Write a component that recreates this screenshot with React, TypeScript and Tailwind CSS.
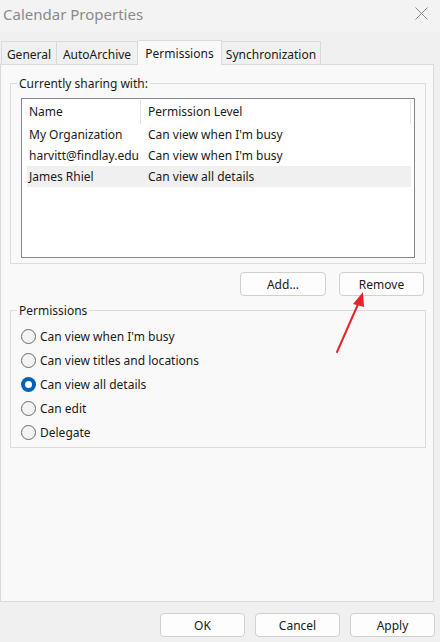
import React from "react";

const font = { fontFamily: '"Noto Sans", "Liberation Sans", sans-serif' };

function Radio({ label, checked }: { label: string; checked?: boolean }) {
  return (
    <div className="flex h-[24px] items-center">
      {checked ? (
        <span className="flex h-[15px] w-[15px] items-center justify-center rounded-full bg-[#005fb8]">
          <span className="h-[7px] w-[7px] rounded-full bg-white" />
        </span>
      ) : (
        <span className="h-[15px] w-[15px] rounded-full border border-[#6b6b6b] bg-[#f3f3f3]" />
      )}
      <span className="ml-[4px] pt-[1px] text-[12px] leading-[16px] text-[#1a1a1a]">{label}</span>
    </div>
  );
}

function Btn({ label, w }: { label: string; w: string }) {
  return (
    <button
      className={`${w} h-[24px] rounded-[4px] border border-[#d0d0d0] bg-[#fdfdfd] pt-[1px] text-[12px] leading-[16px] text-[#1a1a1a]`}
    >
      {label}
    </button>
  );
}

export default function App() {
  const rows = [
    { n: "My Organization", p: "Can view when I'm busy" },
    { n: "harvitt@findlay.edu", p: "Can view when I'm busy" },
    { n: "James Rhiel", p: "Can view all details", sel: true },
  ];
  return (
    <div className="relative flex h-[642px] w-[440px] flex-col overflow-hidden bg-[#f0f0f0]" style={font}>
      {/* Title bar */}
      <div className="flex h-[32px] items-center justify-between bg-[#f3f3f3] pl-[3px] pr-[12px]">
        <span className="-mt-[5px] text-[15px] leading-[20px] text-[#8a8a8a]">Calendar Properties</span>
        <svg width="13" height="13" viewBox="0 0 13 13" className="-mt-[6px]">
          <path d="M0.5 0.5 L12.5 12.5 M12.5 0.5 L0.5 12.5" stroke="#8a8a8a" strokeWidth="1" />
        </svg>
      </div>

      {/* Tabs */}
      <div className="flex h-[32px] items-end pl-[1px]">
        <div className="flex h-[23px] w-[56px] items-center justify-center border border-b-0 border-[#dadada] bg-[#f0f0f0] pt-[3px] text-[12px] text-[#1a1a1a]">
          General
        </div>
        <div className="flex h-[23px] w-[81px] items-center justify-center border border-b-0 border-l-0 border-[#dadada] bg-[#f0f0f0] pt-[3px] text-[12px] text-[#1a1a1a]">
          AutoArchive
        </div>
        <div className="relative z-10 -mb-[1px] flex h-[25px] w-[84px] items-start justify-center border border-b-0 border-l-0 border-[#dadada] bg-[#f9f9f9] pt-[4px] text-[12px] text-[#1a1a1a]">
          Permissions
        </div>
        <div className="flex h-[23px] w-[99px] items-center justify-center border border-b-0 border-l-0 border-[#dadada] bg-[#f0f0f0] pt-[3px] text-[12px] text-[#1a1a1a]">
          Synchronization
        </div>
      </div>

      {/* Panel */}
      <div className="flex h-[538px] w-[434px] flex-col border border-[#dadada] bg-[#f9f9f9]">
        {/* Group 1 */}
        <fieldset className="ml-[9px] mt-[10px] h-[189px] w-[416px] border border-[#dcdcdc] px-[10px] pb-[6px]">
          <legend className="-ml-[4px] px-[2px] pt-[1px] text-[12px] leading-[16px] text-[#1a1a1a]">Currently sharing with:</legend>
          <div className="mt-[6px] h-[160px] w-[394px] border border-[#828790] bg-white">
            <div className="ml-[5px] flex h-[25px] w-[384px] items-center pt-[1px] text-[12px] text-[#1a1a1a]">
              <div className="flex h-full w-[114px] items-center border-r border-[#e5e5e5] pl-[2px]">Name</div>
              <div className="flex h-full flex-1 items-center border-r border-[#e5e5e5] pl-[7px]">Permission Level</div>
            </div>
            {rows.map((r) => (
              <div
                key={r.n}
                className={`ml-[5px] flex h-[21px] w-[384px] items-center pt-[1px] text-[12px] text-[#1a1a1a] ${r.sel ? "bg-[#f0f0f0]" : ""}`}
              >
                <div className="w-[114px] whitespace-nowrap pl-[2px]">{r.n}</div>
                <div className="flex-1 whitespace-nowrap pl-[7px]">{r.p}</div>
              </div>
            ))}
          </div>
        </fieldset>

        {/* Add / Remove */}
        <div className="mt-[8px] flex justify-end gap-[13px] pr-[9px]">
          <Btn label="Add..." w="w-[86px]" />
          <Btn label="Remove" w="w-[85px]" />
        </div>

        {/* Group 2 */}
        <fieldset className="ml-[9px] mt-[6px] h-[146px] w-[416px] border border-[#dcdcdc] pl-[10px] pb-[3px]">
          <legend className="-ml-[4px] px-[2px] pt-[1px] text-[12px] leading-[16px] text-[#1a1a1a]">Permissions</legend>
          <div className="mt-[5px] flex flex-col">
            <Radio label="Can view when I'm busy" />
            <Radio label="Can view titles and locations" />
            <Radio label="Can view all details" checked />
            <Radio label="Can edit" />
            <Radio label="Delegate" />
          </div>
        </fieldset>
      </div>

      {/* Bottom buttons */}
      <div className="mt-[11px] flex justify-end gap-[10px] pr-[5px]">
        <Btn label="OK" w="w-[85px]" />
        <Btn label="Cancel" w="w-[85px]" />
        <Btn label="Apply" w="w-[85px]" />
      </div>

      {/* Red annotation arrow */}
      <svg className="pointer-events-none absolute left-0 top-0" width="440" height="642">
        <line x1="337" y1="352" x2="359" y2="302" stroke="#e3262b" strokeWidth="2" strokeLinecap="round" />
        <polygon points="363,292 353,304 364,307" fill="#e3262b" />
      </svg>
    </div>
  );
}
